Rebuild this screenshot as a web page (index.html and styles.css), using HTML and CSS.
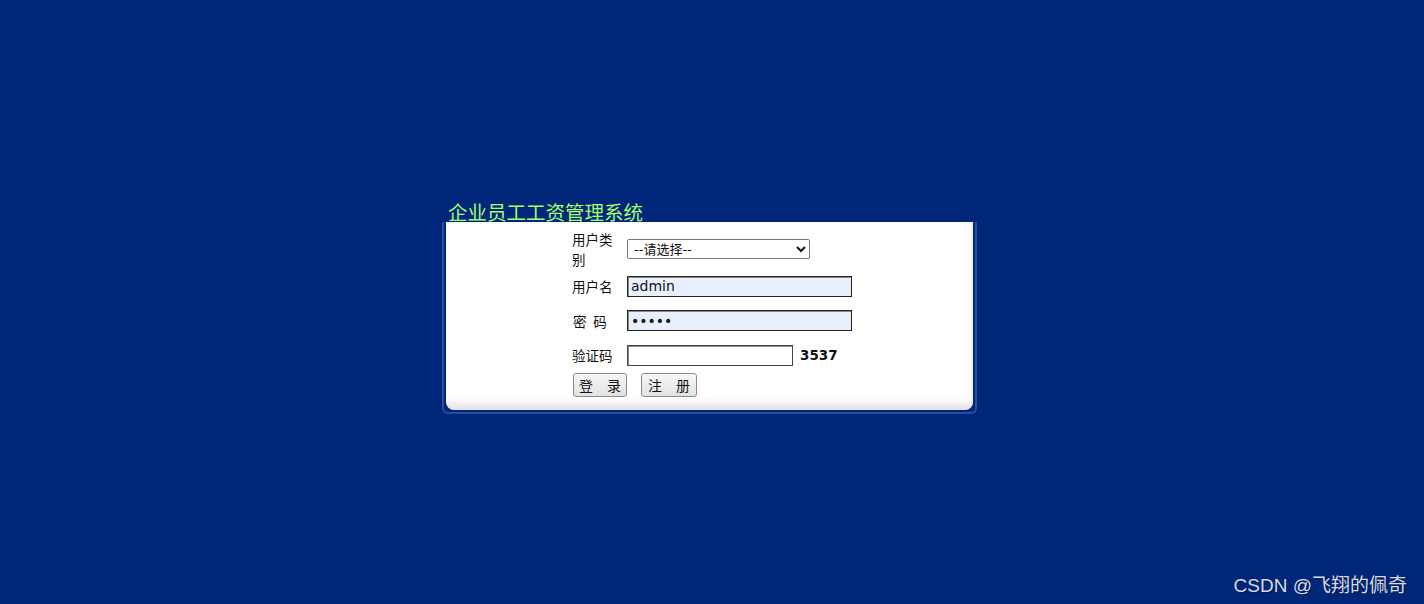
FILE: index.html
```html
<!DOCTYPE html>
<html lang="zh-CN">
<head>
    <meta charset="UTF-8">
    <meta name="viewport" content="width=device-width, initial-scale=1.0">
    <title>企业员工工资管理系统</title>
    <link rel="stylesheet" href="styles.css">
</head>
<body>
    <div class="login">
        <h1 class="title">企业员工工资管理系统</h1>
        <div class="frame">
            <form class="panel">
                <div class="row row-type">
                    <label class="label">用户类别</label>
                    <select class="select">
                        <option>--请选择--</option>
                        <option>管理员</option>
                        <option>员工</option>
                    </select>
                </div>
                <div class="row row-name">
                    <label class="label">用户名</label>
                    <input class="input filled" type="text" value="admin">
                </div>
                <div class="row row-pwd">
                    <label class="label">密&ensp;码</label>
                    <input class="input filled" type="password" value="12345">
                </div>
                <div class="row row-code">
                    <label class="label">验证码</label>
                    <input class="input code" type="text">
                    <span class="captcha">3537</span>
                </div>
                <div class="row row-btn">
                    <button class="btn login-btn" type="button">登&emsp;录</button>
                    <button class="btn reg-btn" type="button">注&emsp;册</button>
                </div>
            </form>
        </div>
    </div>

    <div class="watermark">CSDN @飞翔的佩奇</div>
</body>
</html>
```

FILE: styles.css
```css
* {
    margin: 0;
    padding: 0;
    box-sizing: border-box;
}

body {
    background-color: #00267a;
    font-family: "Noto Sans CJK SC", "Liberation Sans", sans-serif;
    height: 100vh;
    overflow: hidden;
    padding-top: 201px;
    position: relative;
}

.login {
    margin-left: 442px;
    width: 535px;
}

.title {
    font-size: 19.5px;
    font-weight: normal;
    line-height: 21px;
    height: 21px;
    color: #a3ff6a;
    padding-left: 6px;
    white-space: nowrap;
}

.frame {
    border: 2px solid #2a4c9e;
    border-top: none;
    border-radius: 0 0 6px 6px;
    padding: 0 2px 2px 2px;
}

.panel {
    background: linear-gradient(to bottom, #ffffff calc(100% - 12px), #e4dfe6 100%);
    border-radius: 0 0 8px 8px;
    box-shadow: inset -4px 0 6px -3px #dfe6f4;
    padding: 7px 0 13px 126px;
    height: 188px;
}

.row {
    display: flex;
    align-items: center;
}

.row-type { height: 40px; margin-bottom: 6px; }
.row-name { height: 22px; margin-bottom: 12px; }
.row-pwd { height: 23px; margin-bottom: 12px; }
.row-code { height: 22px; margin-bottom: 7px; }
.row-btn { height: 24px; }

.label {
    width: 46px;
    margin-right: 9px;
    font-size: 13.5px;
    line-height: 20px;
    color: #111;
}

.row-pwd .label {
    padding-left: 1px;
}

.select {
    width: 183px;
    height: 20px;
    font-family: "DejaVu Sans", "Noto Sans CJK SC", sans-serif;
    font-size: 13px;
    line-height: 18px;
    color: #111;
    border: 1px solid #767676;
    border-radius: 2px;
    background: #fff;
    padding: 0 0 0 2px;
}

.input {
    height: 21px;
    border: 1px solid #222;
    box-shadow: inset 1px 1px 0 #888;
    font-family: "DejaVu Sans", "Liberation Sans", sans-serif;
    font-size: 14px;
    padding: 0 3px;
    color: #111;
}

.filled {
    width: 225px;
    background-color: #e8f0fe;
}

.code {
    width: 166px;
    background-color: #fff;
    border-color: #444;
}

.captcha {
    margin-left: 7px;
    font-family: "DejaVu Sans", sans-serif;
    font-weight: bold;
    font-size: 13.5px;
    color: #111;
}

.btn {
    height: 24px;
    font-family: "Noto Sans CJK SC", sans-serif;
    font-size: 14px;
    color: #111;
    background: linear-gradient(to bottom, #f7f7f7, #e2e2e2);
    border: 1px solid #8a8a8a;
    border-radius: 3px;
    padding: 0;
    cursor: pointer;
}

.login-btn {
    width: 54px;
    margin-left: 1px;
}

.reg-btn {
    width: 56px;
    margin-left: 14px;
}

.watermark {
    position: absolute;
    right: 17px;
    bottom: 7px;
    font-family: "Liberation Sans", "Noto Sans CJK SC", sans-serif;
    font-size: 19px;
    color: #d6dbe6;
    text-shadow: 1px 1px 1px #0a1a4a;
}
```
